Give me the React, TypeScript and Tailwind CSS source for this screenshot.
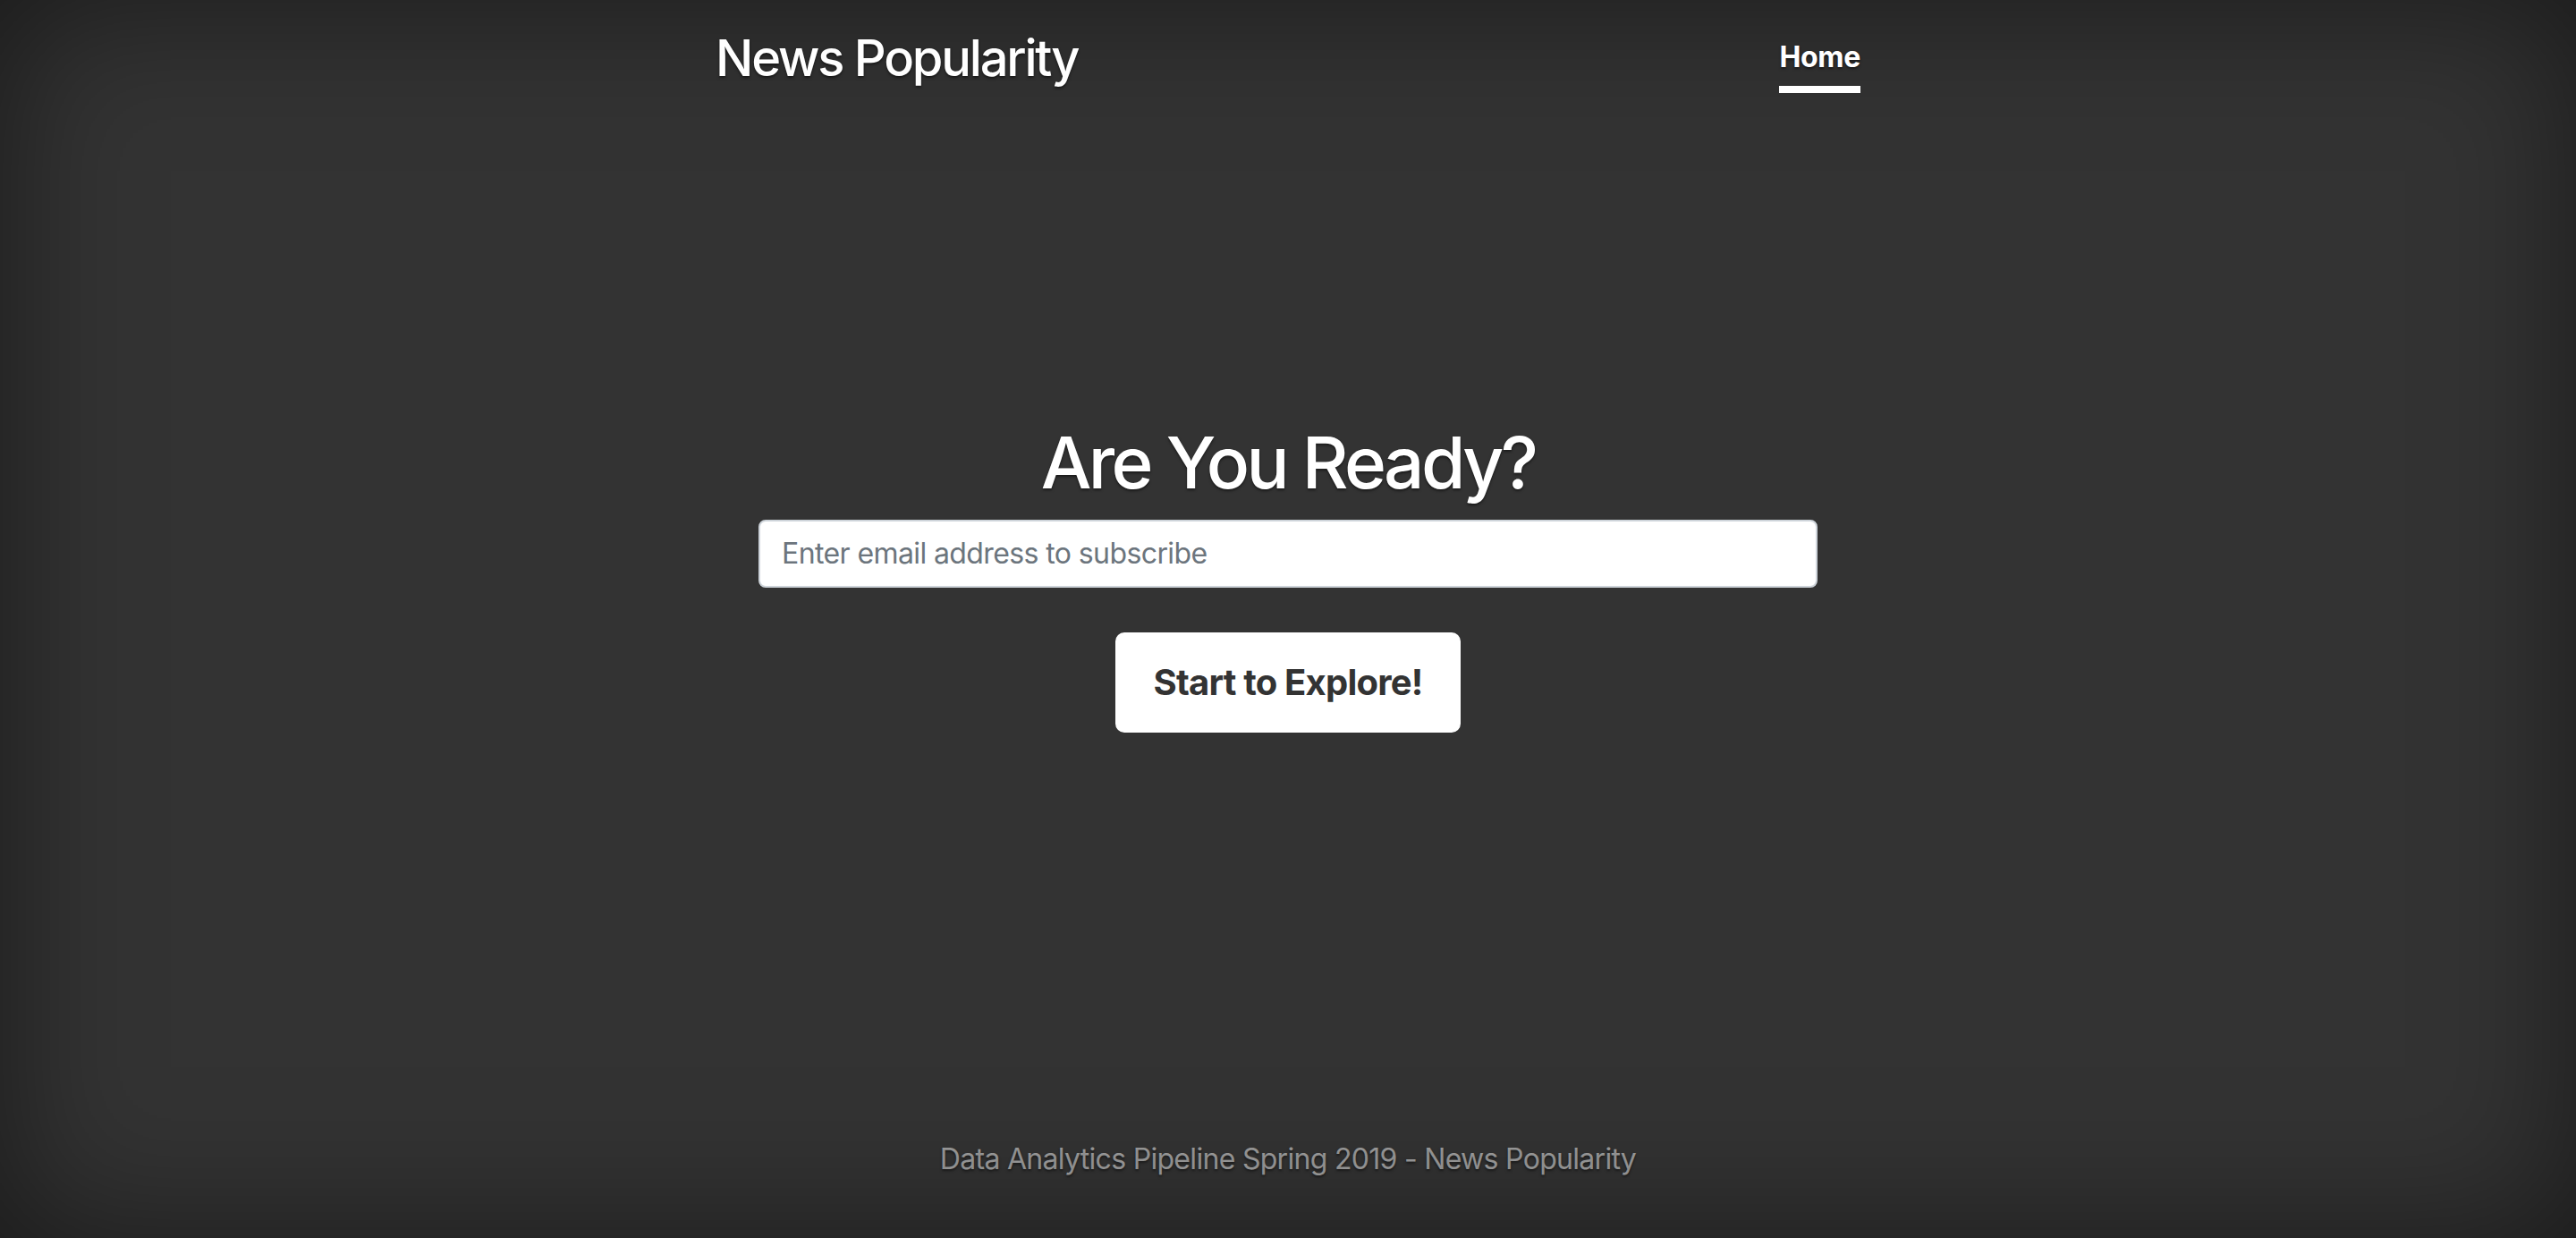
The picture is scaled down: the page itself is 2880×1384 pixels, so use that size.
export default function App() {
  return (
    <div className="min-h-screen w-full bg-[#333] text-white shadow-[inset_0_0_160px_rgba(0,0,0,0.5)] [font-family:Inter,'Noto_Sans',sans-serif] [text-shadow:0_2px_3px_rgba(0,0,0,0.5)]">
      <div className="mx-auto flex h-screen w-[1344px] flex-col p-8">
        <header className="mb-16 flex items-start justify-between">
          <h3 className="text-[56px] leading-[1.2] font-medium tracking-[-2.2px]">News Popularity</h3>
          <nav className="flex">
            <a href="#" className="block border-b-8 border-white py-2 text-[32px] leading-[48px] font-bold tracking-[-0.3px] text-white">
              Home
            </a>
          </nav>
        </header>
        <main className="mt-auto flex flex-col items-center pb-[121px]">
          <h1 className="mb-4 text-[80px] leading-[1.2] font-medium tracking-[-3.6px]">Are You Ready?</h1>
          <input
            type="email"
            placeholder="Enter email address to subscribe"
            className="h-[76px] w-[1184px] rounded-lg border-2 border-[#ced4da] bg-white px-6 text-[32px] tracking-[-0.6px] text-[#495057] outline-none [text-shadow:none] placeholder:text-[#6c757d]"
          />
          <button className="mt-[50px] mb-8 h-[112px] rounded-[10px] border-2 border-white bg-white px-[41px] text-[40px] leading-[60px] font-bold tracking-[-0.8px] text-[#333] [text-shadow:none]">
            Start to Explore!
          </button>
        </main>
        <footer className="mt-auto text-center">
          <p className="mb-8 text-[32px] leading-[48px] tracking-[-0.7px] text-white/50">
            Data Analytics Pipeline Spring 2019 - News Popularity
          </p>
        </footer>
      </div>
    </div>
  );
}
